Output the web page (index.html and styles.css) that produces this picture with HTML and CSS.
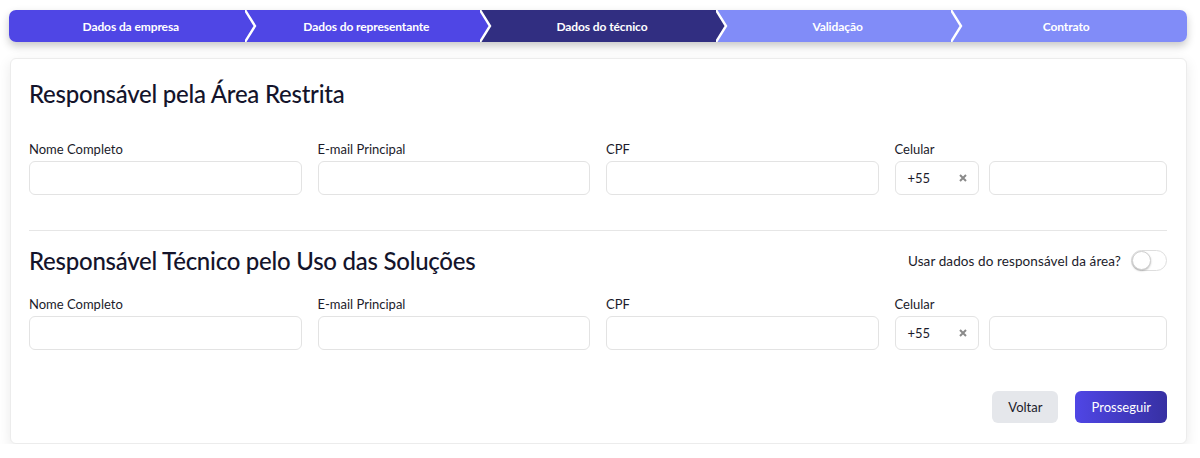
FILE: index.html
```html
<!DOCTYPE html>
<html lang="pt-BR">
<head>
    <meta charset="UTF-8">
    <title>Cadastro - Dados do técnico</title>
    <link rel="stylesheet" href="styles.css">
</head>
<body>
    <nav class="stepper">
        <div class="step step-done">Dados da empresa</div>
        <div class="step step-done">
            <svg class="sep sep-done" viewBox="0 0 12 32" preserveAspectRatio="none"><polygon points="0,0 10,16 0,32"/><polyline points="0,0 10,16 0,32"/></svg>
            Dados do representante
        </div>
        <div class="step step-current">
            <svg class="sep sep-done" viewBox="0 0 12 32" preserveAspectRatio="none"><polygon points="0,0 10,16 0,32"/><polyline points="0,0 10,16 0,32"/></svg>
            Dados do técnico
        </div>
        <div class="step step-next">
            <svg class="sep sep-current" viewBox="0 0 12 32" preserveAspectRatio="none"><polygon points="0,0 10,16 0,32"/><polyline points="0,0 10,16 0,32"/></svg>
            Validação
        </div>
        <div class="step step-next">
            <svg class="sep sep-next" viewBox="0 0 12 32" preserveAspectRatio="none"><polygon points="0,0 10,16 0,32"/><polyline points="0,0 10,16 0,32"/></svg>
            Contrato
        </div>
    </nav>

    <main class="card">
        <h2 class="section-title">Responsável pela Área Restrita</h2>
        <div class="form-grid first-grid">
            <div class="field">
                <label>Nome Completo</label>
                <input type="text">
            </div>
            <div class="field">
                <label>E-mail Principal</label>
                <input type="text">
            </div>
            <div class="field">
                <label>CPF</label>
                <input type="text">
            </div>
            <div class="field">
                <label>Celular</label>
                <div class="phone">
                    <div class="ddi">+55 <svg class="clear" viewBox="0 0 8 8"><path d="M1 1L7 7M7 1L1 7"/></svg></div>
                    <input type="text">
                </div>
            </div>
        </div>

        <hr class="divider">

        <div class="section-head">
            <h2 class="section-title">Responsável Técnico pelo Uso das Soluções</h2>
            <label class="switch-label">Usar dados do responsável da área? <span class="switch"><span class="knob"></span></span></label>
        </div>
        <div class="form-grid">
            <div class="field">
                <label>Nome Completo</label>
                <input type="text">
            </div>
            <div class="field">
                <label>E-mail Principal</label>
                <input type="text">
            </div>
            <div class="field">
                <label>CPF</label>
                <input type="text">
            </div>
            <div class="field">
                <label>Celular</label>
                <div class="phone">
                    <div class="ddi">+55 <svg class="clear" viewBox="0 0 8 8"><path d="M1 1L7 7M7 1L1 7"/></svg></div>
                    <input type="text">
                </div>
            </div>
        </div>

        <div class="actions">
            <button class="btn btn-back">Voltar</button>
            <button class="btn btn-next">Prosseguir</button>
        </div>
    </main>
</body>
</html>
```

FILE: styles.css
```css
body {
    font-family: 'Lato', 'Noto Sans', sans-serif;
    margin: 0;
    padding: 10px 13px 0 9px;
    background-color: #fff;
    color: #1b1b2a;
}

/* barra de etapas */
.stepper {
    display: flex;
    height: 32px;
    border-radius: 7px;
    overflow: hidden;
    box-shadow: 0 4px 8px rgba(0, 0, 0, 0.22);
}

.step {
    flex: none;
    width: 20%;
    box-sizing: border-box;
    position: relative;
    display: flex;
    align-items: center;
    justify-content: center;
    padding-left: 8px;
    color: #fff;
    font-size: 12px;
    font-weight: 700;
    letter-spacing: -0.1px;
}

.step:last-child {
    padding-left: 0;
    padding-right: 6px;
}

.step-done { background-color: #4f46e5; }
.step-current { background-color: #312e81; }
.step-next { background-color: #818cf8; }

.sep {
    position: absolute;
    left: 0;
    top: 0;
    width: 12px;
    height: 32px;
}

.sep polyline {
    fill: none;
    stroke: #fff;
    stroke-width: 2.4;
}

.sep-done polygon { fill: #4f46e5; }
.sep-current polygon { fill: #312e81; }
.sep-next polygon { fill: #818cf8; }

/* cartão do formulário */
.card {
    margin: 16px 0 0 1px;
    background: #fff;
    border: 1px solid #ececec;
    border-radius: 6px;
    padding: 20px 19px 20px 18px;
    box-shadow: 0 4px 14px rgba(0, 0, 0, 0.09);
}

.section-title {
    margin: 0;
    font-size: 24px;
    font-weight: 500;
    letter-spacing: -0.25px;
    color: #14142b;
}

.form-grid {
    display: grid;
    grid-template-columns: repeat(4, 1fr);
    gap: 16px;
    margin-top: 21px;
}

.first-grid {
    margin-top: 33px;
}

.field label {
    display: block;
    font-size: 13px;
    margin-bottom: 4px;
    color: #1b1b2a;
}

input[type="text"] {
    box-sizing: border-box;
    width: 100%;
    height: 34px;
    border: 1px solid #e3e3e3;
    border-radius: 6px;
    font-family: inherit;
    font-size: 13px;
    padding: 0 10px;
}

.phone {
    display: flex;
    gap: 10px;
}

.ddi {
    box-sizing: border-box;
    flex: 0 0 84px;
    height: 34px;
    display: flex;
    align-items: center;
    justify-content: space-between;
    padding: 0 11px 0 12px;
    border: 1px solid #e3e3e3;
    border-radius: 6px;
    font-size: 13px;
}

.clear {
    width: 8px;
    height: 8px;
}

.clear path {
    stroke: #8a8a8a;
    stroke-width: 2;
    fill: none;
}

.divider {
    border: none;
    border-top: 1px solid #e6e6e6;
    margin: 35px 0 15px;
}

.section-head {
    display: flex;
    align-items: center;
    justify-content: space-between;
}

.switch-label {
    display: flex;
    align-items: center;
    gap: 10px;
    font-size: 13.5px;
    letter-spacing: 0.1px;
}

.switch {
    width: 34px;
    height: 19px;
    border: 1px solid #dedede;
    border-radius: 11px;
    position: relative;
    display: inline-block;
}

.knob {
    position: absolute;
    left: 0;
    top: 0;
    width: 17px;
    height: 17px;
    border-radius: 50%;
    background: #fff;
    border: 1px solid #cfcfcf;
    box-shadow: 0 1px 2px rgba(0, 0, 0, 0.25);
}

.actions {
    display: flex;
    justify-content: flex-end;
    gap: 17px;
    margin-top: 41px;
}

.btn {
    height: 32px;
    border: none;
    border-radius: 6px;
    font-family: inherit;
    font-size: 13px;
    padding: 0 16px;
    cursor: pointer;
}

.btn-back {
    background-color: #e5e7eb;
    color: #1b1b2a;
}

.btn-next {
    background: linear-gradient(90deg, #4f46e5, #3730a3);
    color: #fff;
}
```
